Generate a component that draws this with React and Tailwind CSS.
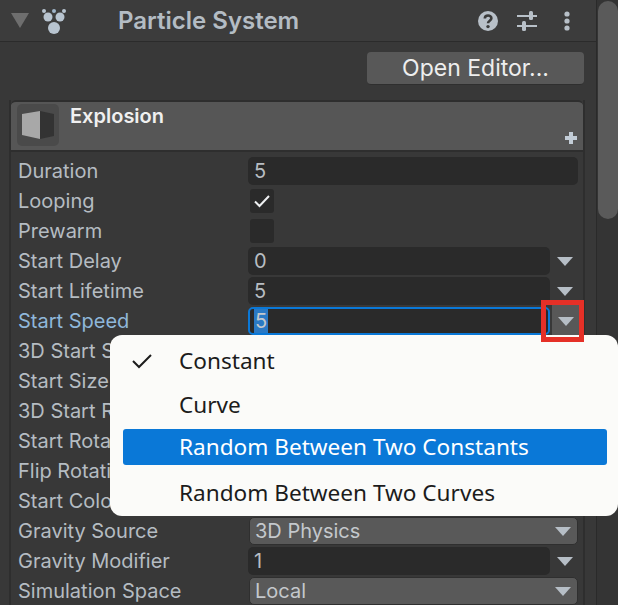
import React from 'react';

const ui = 'font-["Inter","Liberation_Sans",sans-serif]';

// triangle used on every curve / enum dropdown
function Arrow({ className = '' }) {
  return (
    <svg width="16" height="9" viewBox="0 0 16 9" className={className}>
      <path d="M0 0H16L8 9Z" fill="#b6bec6" />
    </svg>
  );
}

function CurveField({ value }) {
  return (
    <div className="flex items-center">
      <div className="w-[302px] h-[28px] rounded-[5px] bg-[#2a2a2a] pl-[6px] flex items-center text-[20px] text-[#b8bdc2]">{value}</div>
      <div className="w-[28px] flex justify-center pl-[1px]"><Arrow /></div>
    </div>
  );
}

function NumberField({ value }) {
  return (
    <div className="w-[330px] h-[28px] rounded-[5px] bg-[#2a2a2a] pl-[6px] flex items-center text-[20px] text-[#b8bdc2]">{value}</div>
  );
}

function EnumField({ value }) {
  return (
    <div className="ml-[1px] w-[329px] h-[28px] rounded-[5px] bg-[#595959] border border-[#2f2f2f] pl-[5px] pr-[4px] flex items-center justify-between text-[20px] text-[#c4c8cc]">
      <span>{value}</span>
      <Arrow className="mr-[2px]" />
    </div>
  );
}

function Check({ on }) {
  return (
    <div className="ml-[2px] w-[24px] h-[24px] rounded-[3px] bg-[#2a2a2a] flex items-center justify-center">
      {on && (
        <svg width="18" height="14" viewBox="0 0 18 14">
          <path d="M2 7.5L6.5 12L16 2" fill="none" stroke="#eef0f2" strokeWidth="2" />
        </svg>
      )}
    </div>
  );
}

function SpeedField() {
  return (
    <div className="flex items-center">
      <div className="w-[302px] h-[28px] rounded-[5px] bg-[#2a2a2a] border-2 border-[#0a78d7] pl-[4px] flex items-center text-[20px] text-[#c4c8cc]">
        <span className="bg-[#2a79c4] px-[1px] leading-[24px]">5</span>
      </div>
      <div className="ml-[2px] w-[28px] h-[32px] bg-[#585858] flex items-center justify-center"><Arrow /></div>
    </div>
  );
}

const rows = [
  ['Duration', <NumberField value="5" />],
  ['Looping', <Check on />],
  ['Prewarm', <Check />],
  ['Start Delay', <CurveField value="0" />],
  ['Start Lifetime', <CurveField value="5" />],
  ['Start Speed', <SpeedField />],
  ['3D Start Size', <Check />],
  ['Start Size', <CurveField value="" />],
  ['3D Start Rotation', <Check />],
  ['Start Rotation', <CurveField value="" />],
  ['Flip Rotation', <NumberField value="" />],
  ['Start Color', <NumberField value="" />],
  ['Gravity Source', <EnumField value="3D Physics" />],
  ['Gravity Modifier', <CurveField value="1" />],
  ['Simulation Space', <EnumField value="Local" />],
];

export default function App() {
  return (
    <div className={`relative w-[618px] h-[605px] overflow-hidden flex bg-[#383838] ${ui}`}>
      <div className="w-[597px] h-[605px] border-r border-[#2a2a2a] shrink-0">
        {/* component header */}
        <div className="h-[42px] bg-[#3c3c3c] border-b border-[#2b2b2b] flex items-center text-[#b4bcc4]">
          <svg width="18" height="16" viewBox="0 0 18 16" className="ml-[11px]">
            <path d="M0 0H18L9 15Z" fill="#6e6e6e" />
          </svg>
          <svg width="26" height="30" viewBox="0 0 26 30" className="ml-[12px]">
            <circle cx="3" cy="5" r="2" fill="#b8c4d0" />
            <circle cx="13" cy="5" r="2" fill="#9fb4c8" />
            <circle cx="23" cy="5" r="2" fill="#b8c4d0" />
            <circle cx="7" cy="11" r="4.5" fill="#b8c4d0" />
            <circle cx="19" cy="11" r="4.5" fill="#b8c4d0" />
            <circle cx="13" cy="22" r="6" fill="#b8c4d0" />
          </svg>
          <span className="ml-[51px] text-[24px] font-semibold">Particle System</span>
          <svg width="20" height="20" viewBox="0 0 20 20" className="ml-auto">
            <circle cx="10" cy="10" r="10" fill="#b8c0c8" />
            <path d="M6.8 7.5C6.8 3.6 13.4 3.6 13.4 7.3C13.4 9.8 10 9.6 10 12.2" fill="none" stroke="#3a3a3a" strokeWidth="2.6" />
            <circle cx="10" cy="15.6" r="1.7" fill="#3a3a3a" />
          </svg>
          <svg width="20" height="20" viewBox="0 0 20 20" className="ml-[19px]">
            <path d="M0 5H20M0 15H20" stroke="#b8c0c8" strokeWidth="2" />
            <rect x="12" y="0" width="4" height="9" rx="1.5" fill="#b8c0c8" />
            <rect x="5" y="10" width="4" height="10" rx="1.5" fill="#b8c0c8" />
          </svg>
          <svg width="6" height="20" viewBox="0 0 6 20" className="ml-[27px] mr-[26px]">
            <circle cx="3" cy="3" r="2.6" fill="#b8c0c8" />
            <circle cx="3" cy="10" r="2.6" fill="#b8c0c8" />
            <circle cx="3" cy="17" r="2.6" fill="#b8c0c8" />
          </svg>
        </div>

        <div className="h-[58px] flex justify-end pr-[12px] pt-[10px]">
          <button className="w-[217px] h-[33px] rounded-[4px] bg-[#585858] border-b border-[#2f2f2f] text-[23px] leading-[30px] text-[#eeeeee]">Open Editor...</button>
        </div>

        {/* material panel */}
        <div className="ml-[9px] mr-[11px] h-[505px] border-l-2 border-r-2 border-[#2e2e2e]">
          <div className="relative h-[52px] bg-[#565656] border-t-2 border-b-2 border-[#2e2e2e] rounded-t-[5px] flex items-start">
            <div className="ml-[6px] mt-[2px] w-[42px] h-[42px] rounded-[5px] bg-[#4a4a4a] flex items-center justify-center">
              <svg width="32" height="28" viewBox="0 0 32 28">
                <path d="M0 3L18 0V28L0 24Z" fill="#a8a8a8" />
                <path d="M18 0L32 3V25L18 28Z" fill="#333333" />
              </svg>
            </div>
            <span className="ml-[11px] mt-[-1px] text-[20px] font-semibold text-[#f0f0f0]">Explosion</span>
            <svg width="12" height="12" viewBox="0 0 12 12" className="absolute right-[6px] bottom-[6px]">
              <path d="M4 0H8V4H12V8H8V12H4V8H0V4H4Z" fill="#c2ccd6" />
            </svg>
          </div>
          <div className="pt-[4px]">
            {rows.map(([label, field], i) => (
              <div key={label} className="h-[30px] flex items-center">
                <span className={`w-[237px] pl-[7px] shrink-0 text-[20px] whitespace-nowrap ${i === 5 ? 'text-[#8fb7da]' : 'text-[#b5bcc2]'}`}>{label}</span>
                {field}
              </div>
            ))}
          </div>
        </div>
      </div>

      {/* scrollbar */}
      <div className="flex-1 bg-[#343434] pt-[1px] pl-[1px]">
        <div className="h-[218px] rounded-[10px] bg-[#5a5a5a]"></div>
      </div>

      {/* curve popup */}
      <div className='absolute left-[110px] top-[335px] w-[508px] h-[181px] rounded-[12px] bg-[#fbfbf9] pt-[4px] pl-[13px] pr-[11px] text-[22.6px] text-[#1c1c1c] font-["Noto_Sans","Open_Sans",sans-serif]'>
        <div className="h-[44px] flex items-center pl-[56px] relative">
          <svg width="20" height="16" viewBox="0 0 20 16" className="absolute left-[9px] top-[14px]">
            <path d="M1 8L7 14L19 2" fill="none" stroke="#1c1c1c" strokeWidth="2" />
          </svg>
          Constant
        </div>
        <div className="h-[44px] flex items-center pl-[56px]">Curve</div>
        <div className="h-[36px] mt-[2px] mb-[6px] rounded-[3px] bg-[#0a78d7] text-white flex items-center pl-[56px]">Random Between Two Constants</div>
        <div className="h-[44px] flex items-center pl-[56px]">Random Between Two Curves</div>
      </div>

      {/* red callout around the curve button, sits over the popup edge */}
      <div className="absolute left-[541px] top-[300px] w-[43px] h-[42px] border-[5px] border-[#e53027]"></div>
    </div>
  );
}
